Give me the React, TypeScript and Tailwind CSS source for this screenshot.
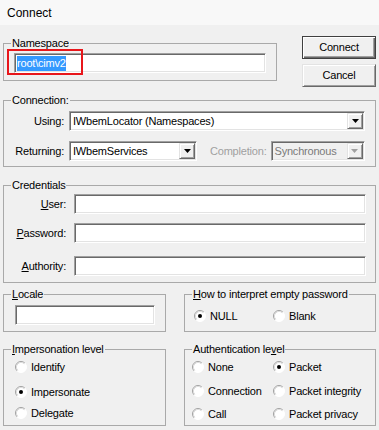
import type { ReactNode } from 'react';

const sunken =
  'border border-t-[#a0a0a0] border-l-[#a0a0a0] border-r-white border-b-white shadow-[inset_1px_1px_0_#696969,inset_-1px_-1px_0_#e3e3e3]';
const raised =
  'border border-t-[#e3e3e3] border-l-[#e3e3e3] border-r-[#696969] border-b-[#696969] shadow-[inset_1px_1px_0_#fff,inset_-1px_-1px_0_#a0a0a0]';

function Group({
  label,
  className,
  bodyClass,
  children,
}: {
  label: ReactNode;
  className: string;
  bodyClass: string;
  children: ReactNode;
}) {
  return (
    <fieldset className={`border border-[#a9a9a9] p-0 ${className}`}>
      <legend className="ml-[7px] px-[1px] leading-[13px]">{label}</legend>
      <div className={bodyClass}>{children}</div>
    </fieldset>
  );
}

function Arrow({ disabled }: { disabled?: boolean }) {
  return (
    <div className={`mr-[1px] flex h-[16px] w-[16px] items-center justify-center bg-[#f0f0f0] ${raised}`}>
      <svg width="7" height="4" viewBox="0 0 7 4">
        <path d="M0 0h7L3.5 4z" fill={disabled ? '#a0a0a0' : '#000'} />
      </svg>
    </div>
  );
}

function Combo({ value, className, disabled }: { value: string; className: string; disabled?: boolean }) {
  return (
    <div
      className={`flex h-[20px] items-center ${sunken} ${
        disabled ? 'bg-[#f0f0f0] text-[#7a7a7a]' : 'bg-white'
      } ${className}`}
    >
      <span className="flex-1 truncate pl-[3px]">{value}</span>
      <Arrow disabled={disabled} />
    </div>
  );
}

function TextBox({ className }: { className: string }) {
  return <div className={`h-[20px] bg-white ${sunken} ${className}`} />;
}

function Radio({ label, checked, className = '' }: { label: string; checked?: boolean; className?: string }) {
  return (
    <div className={`flex h-[14px] items-center gap-[4px] ${className}`}>
      <svg width="12" height="12" viewBox="0 0 12 12" className="shrink-0">
        <circle cx="6" cy="6" r="5.5" fill="#fff" />
        <path d="M2.11 9.89A5.5 5.5 0 0 1 9.89 2.11" fill="none" stroke="#a0a0a0" />
        <path d="M2.82 9.18A4.5 4.5 0 0 1 9.18 2.82" fill="none" stroke="#dcdcdc" />
        <path d="M9.89 2.11A5.5 5.5 0 0 1 2.11 9.89" fill="none" stroke="#fff" />
        {checked && <circle cx="6" cy="6" r="2" fill="#000" />}
      </svg>
      <span>{label}</span>
    </div>
  );
}

export default function App() {
  return (
    <div className="h-[430px] w-[379px] overflow-hidden bg-[#f0f0f0] font-['Liberation_Sans',Arial,sans-serif] text-[11px] tracking-[-0.2px] text-black">
      <div className="flex h-[25px] items-center bg-[#f8f8f8] pl-[7px] text-[12px] tracking-normal">Connect</div>

      <div className="px-[3px]">
        <div className="mt-[11px] flex items-start">
          <Group label="Namespace" className="mt-[1px] h-[44px] w-[274px]" bodyClass="pl-[10px] pt-[3px]">
            <div className={`relative flex h-[20px] w-[252px] items-center bg-white pl-[2px] ${sunken}`}>
              <span className="bg-[#3399ff] leading-[15px] text-white">root\cimv2</span>
              <div className="absolute left-[-8px] top-[-5px] h-[26px] w-[76px] border-2 border-[#e8161b]" />
            </div>
          </Group>

          <div className="ml-auto flex w-[74px] flex-col">
            <button className="flex h-[23px] items-center justify-center border border-[#404040] bg-[#f0f0f0] shadow-[inset_1px_1px_0_#fff,inset_-1px_-1px_0_#696969,inset_-2px_-2px_0_#a0a0a0]">
              Connect
            </button>
            <button className={`mt-[5px] flex h-[23px] items-center justify-center bg-[#f0f0f0] ${raised}`}>
              Cancel
            </button>
          </div>
        </div>

        <Group label="Connection:" className="mt-[7px] h-[73px]" bodyClass="pt-[4px]">
          <div className="flex items-center">
            <span className="w-[60px] text-right">Using:</span>
            <Combo value="IWbemLocator (Namespaces)" className="ml-[5px] w-[296px]" />
          </div>
          <div className="mt-[10px] flex items-center">
            <span className="w-[60px] text-right">Returning:</span>
            <Combo value="IWbemServices" className="ml-[5px] w-[128px]" />
            <span className="ml-[13px] text-[#a0a0a0]">Completion:</span>
            <Combo value="Synchronous" className="ml-[4px] w-[94px]" disabled />
          </div>
        </Group>

        <Group label="Credentials" className="mt-[12px] h-[104px]" bodyClass="pt-[2px]">
          <div className="flex items-center">
            <span className="w-[62px] text-right">
              <u>U</u>ser:
            </span>
            <TextBox className="ml-[8px] w-[292px]" />
          </div>
          <div className="mt-[9px] flex items-center">
            <span className="w-[62px] text-right">
              <u>P</u>assword:
            </span>
            <TextBox className="ml-[8px] w-[292px]" />
          </div>
          <div className="mt-[13px] flex items-center">
            <span className="w-[62px] text-right">
              <u>A</u>uthority:
            </span>
            <TextBox className="ml-[8px] w-[292px]" />
          </div>
        </Group>

        <div className="mt-[5px] flex gap-[18px]">
          <Group
            label={
              <>
                <u>L</u>ocale
              </>
            }
            className="h-[44px] w-[163px]"
            bodyClass="pl-[11px] pt-[4px]"
          >
            <TextBox className="w-[140px]" />
          </Group>
          <Group
            label={
              <>
                <u>H</u>ow to interpret empty password
              </>
            }
            className="h-[44px] w-[192px]"
            bodyClass="flex pl-[9px] pt-[8px]"
          >
            <Radio label="NULL" checked className="w-[79px]" />
            <Radio label="Blank" />
          </Group>
        </div>

        <div className="mt-[11px] flex gap-[18px]">
          <Group
            label={
              <>
                <u>I</u>mpersonation level
              </>
            }
            className="h-[83px] w-[163px]"
            bodyClass="pl-[11px] pt-[4px]"
          >
            <Radio label="Identify" />
            <Radio label="Impersonate" checked className="mt-[11px]" />
            <Radio label="Delegate" className="mt-[7px]" />
          </Group>
          <Group
            label={
              <>
                Authentication le<u>v</u>el
              </>
            }
            className="h-[83px] w-[192px]"
            bodyClass="pl-[7px] pt-[4px]"
          >
            <div className="flex">
              <Radio label="None" className="w-[81px]" />
              <Radio label="Packet" checked />
            </div>
            <div className="mt-[10px] flex">
              <Radio label="Connection" className="w-[81px]" />
              <Radio label="Packet integrity" />
            </div>
            <div className="mt-[9px] flex">
              <Radio label="Call" className="w-[81px]" />
              <Radio label="Packet privacy" />
            </div>
          </Group>
        </div>
      </div>
    </div>
  );
}
